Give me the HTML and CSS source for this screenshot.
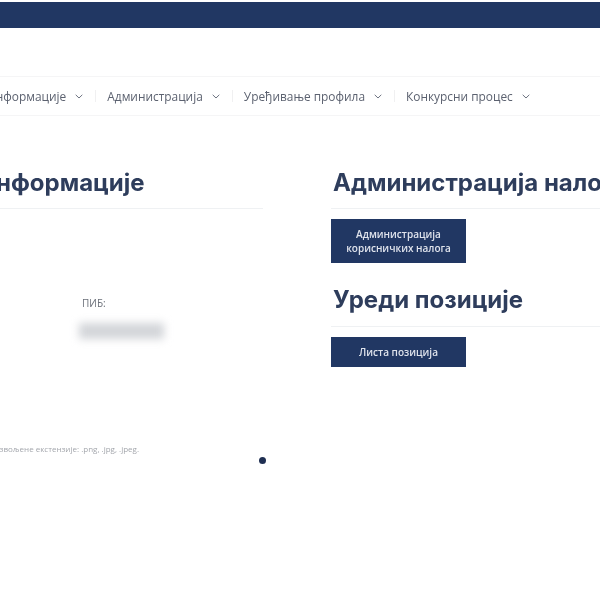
FILE: index.html
```html
<!DOCTYPE html>
<html lang="sr">
<head>
<meta charset="utf-8">
<title>Администрација</title>
<link rel="stylesheet" href="styles.css">
</head>
<body>
<div class="page">
  <div class="topbar"></div>
  <nav class="nav">
    <div class="nav-item"><span>Основне информације</span><svg class="chev" viewBox="0 0 8 5"><path d="M.7.8 4 4 7.3.8"/></svg></div>
    <i class="sep"></i>
    <div class="nav-item"><span>Администрација</span><svg class="chev" viewBox="0 0 8 5"><path d="M.7.8 4 4 7.3.8"/></svg></div>
    <i class="sep"></i>
    <div class="nav-item"><span>Уређивање профила</span><svg class="chev" viewBox="0 0 8 5"><path d="M.7.8 4 4 7.3.8"/></svg></div>
    <i class="sep"></i>
    <div class="nav-item"><span>Конкурсни процес</span><svg class="chev" viewBox="0 0 8 5"><path d="M.7.8 4 4 7.3.8"/></svg></div>
  </nav>
  <main class="content">
    <section class="left">
      <div class="head-wrap"><h2 class="title">Основне информације</h2></div>
      <div class="pib">
        <div class="pib-label">ПИБ:</div>
        <div class="pib-value"></div>
      </div>
      <p class="hint">Дозвољене екстензије: .png, .jpg, .jpeg.</p>
    </section>
    <section class="right">
      <div class="head-wrap"><h2 class="title">Администрација налога</h2></div>
      <a class="btn btn-tall">Администрација<br>корисничких налога</a>
      <div class="head-wrap second"><h2 class="title">Уреди позиције</h2></div>
      <a class="btn btn-short">Листа позиција</a>
    </section>
    <span class="dot"></span>
  </main>
</div>
</body>
</html>
```

FILE: styles.css
```css
* { box-sizing: border-box; }
html, body { margin: 0; height: 100%; background: #fff; overflow: hidden; }
.page { width: 600px; height: 600px; overflow: hidden; padding-top: 2px; font-family: "Inter", "Liberation Sans", sans-serif; color: #2e3d5c; }
.topbar { height: 26px; background: #213763; filter: blur(.5px); }
.nav { margin-top: 48px; height: 40px; width: 900px; margin-left: -65.5px; display: flex; align-items: center; border-top: 1px solid #f5f5f6; border-bottom: 1px solid #f5f5f6; font-family: "Open Sans", sans-serif; font-size: 11.9px; color: #5c6270; white-space: nowrap; }
.nav-item { display: flex; align-items: center; gap: 9px; filter: blur(.5px); }
.chev { width: 8px; height: 5px; fill: none; stroke: #6d7380; stroke-width: 1; }
.sep { width: 1px; height: 12px; background: #f0f0f1; margin: 0 11px 0 12px; }
.content { position: relative; display: flex; width: 930px; margin-left: -130px; }
.left { width: 393px; flex: none; }
.right { margin-left: 68px; width: 400px; flex: none; }
.head-wrap { height: 93px; padding-top: 52px; border-bottom: 1px solid #eff1f3; padding-left: 2px; }
.head-wrap.second { height: 64px; padding-top: 22px; }
.left .head-wrap { padding-left: 0; }
.title { margin: 0; font-size: 24px; line-height: 30px; font-weight: 700; color: #2e3d5c; white-space: nowrap; filter: blur(.5px); }
.btn { display: flex; align-items: center; justify-content: center; width: 135px; margin-top: 10px; background: #213763; color: #dfe3ec; font-family: "Open Sans", sans-serif; font-size: 10px; font-weight: 600; line-height: 14px; text-align: center; filter: blur(.4px); }
.btn-tall { height: 44px; }
.btn-short { height: 30px; }
.pib { margin-left: 212px; padding-top: 87px; }
.pib-label { font-family: "Open Sans", sans-serif; font-size: 10px; line-height: 14px; color: #6b7079; filter: blur(.5px); }
.pib-value { width: 85px; height: 16px; margin: 13px 0 0 -3px; background: #d3d5d9; filter: blur(4px); }
.hint { margin: 105px 0 0 0; padding-right: 124px; text-align: right; font-family: "Open Sans", sans-serif; font-size: 8px; line-height: 10px; color: #a3a6ac; white-space: nowrap; filter: blur(.6px); }
.dot { position: absolute; left: 389px; top: 341px; width: 7px; height: 7px; border-radius: 50%; background: #1f2f52; filter: blur(.3px); }
```
